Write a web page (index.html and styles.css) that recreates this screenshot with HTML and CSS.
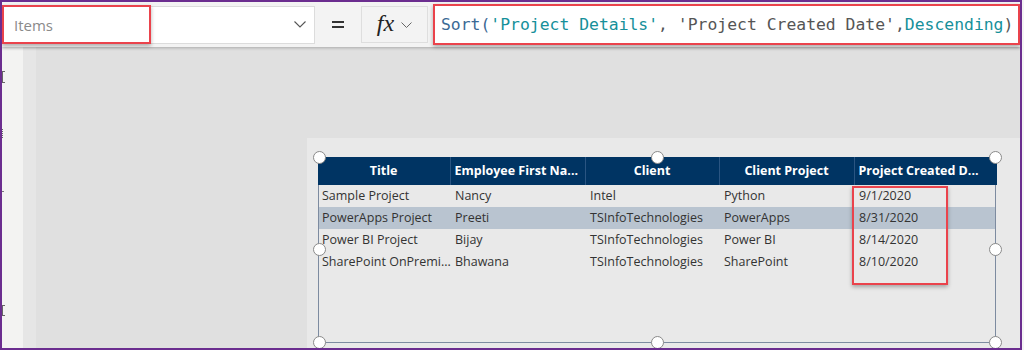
FILE: index.html
```html
<!DOCTYPE html>
<html lang="en">
<head>
    <title>Items - Power Apps</title>
    <link rel="stylesheet" href="styles.css">
</head>
<body>

<div class="frame">
    <div class="formula-bar">
        <div class="property-select">
            <span class="property-name">Items</span>
            <svg class="chevron" width="12" height="7" viewBox="0 0 12 7"><polyline points="0.5,0.5 6,6 11.5,0.5" fill="none" stroke="#555" stroke-width="1.1"/></svg>
            <span class="highlight items-highlight"></span>
        </div>
        <div class="equals"><span></span></div>
        <div class="fx-button">
            <span class="fx">fx</span>
            <svg class="chevron" width="11" height="6" viewBox="0 0 11 6"><polyline points="0.5,0.5 5.5,5.5 10.5,0.5" fill="none" stroke="#666" stroke-width="1"/></svg>
        </div>
        <div class="formula">
            <span class="fn">Sort(</span><span class="str">'Project Details'</span><span class="plain">, 'Project Created Date',</span><span class="str">Descending</span><span class="plain">)</span>
        </div>
    </div>

    <div class="workspace">
        <div class="rail">
            <!-- clipped icon edges of the tree view -->
            <span class="rail-mark mark-1"></span>
            <span class="rail-mark mark-2"></span>
            <span class="rail-mark mark-3"></span>
            <span class="rail-mark mark-4"></span>
        </div>
        <div class="rail-edge"></div>
        <div class="canvas">
            <div class="screen">
                <div class="gallery">
                    <div class="grid header">
                        <div class="head-cell center">Title</div>
                        <div class="head-cell">Employee First Na...</div>
                        <div class="head-cell center">Client</div>
                        <div class="head-cell center">Client Project</div>
                        <div class="head-cell">Project Created D...</div>
                    </div>
                    <div class="grid row">
                        <div>Sample Project</div><div>Nancy</div><div>Intel</div><div>Python</div><div>9/1/2020</div>
                    </div>
                    <div class="grid row selected">
                        <div>PowerApps Project</div><div>Preeti</div><div>TSInfoTechnologies</div><div>PowerApps</div><div>8/31/2020</div>
                    </div>
                    <div class="grid row">
                        <div>Power BI Project</div><div>Bijay</div><div>TSInfoTechnologies</div><div>Power BI</div><div>8/14/2020</div>
                    </div>
                    <div class="grid row">
                        <div>SharePoint OnPremi...</div><div>Bhawana</div><div>TSInfoTechnologies</div><div>SharePoint</div><div>8/10/2020</div>
                    </div>

                    <span class="highlight dates-highlight"></span>

                    <span class="handle h-tl"></span>
                    <span class="handle h-tc"></span>
                    <span class="handle h-tr"></span>
                    <span class="handle h-ml"></span>
                    <span class="handle h-mr"></span>
                    <span class="handle h-bl"></span>
                    <span class="handle h-bc"></span>
                    <span class="handle h-br"></span>
                </div>
            </div>
        </div>
    </div>
</div>

</body>
</html>
```

FILE: styles.css
```css
body {
    margin: 0;
    padding: 0;
    background-color: #f4f4f4;
    font-family: "Open Sans", Arial, sans-serif;
}

.frame {
    width: 1022px;
    height: 350px;
    box-sizing: border-box;
    border: 2px solid #6b2d8f;
    display: flex;
    flex-direction: column;
    overflow: hidden;
}

/* top formula bar */

.formula-bar {
    height: 45px;
    flex-shrink: 0;
    display: flex;
    align-items: center;
    background-color: #f3f3f3;
    box-shadow: 0 1px 3px rgba(0, 0, 0, 0.25);
    position: relative;
    z-index: 2;
}

.property-select {
    position: relative;
    width: 312px;
    height: 38px;
    margin-left: 1px;
    box-sizing: border-box;
    background-color: white;
    border: 1px solid #dcdcdc;
    display: flex;
    align-items: center;
    justify-content: space-between;
    padding: 0 8px 0 10px;
}

.property-name {
    font-size: 15px;
    color: #8a8a8a;
}

.equals {
    width: 46px;
    display: flex;
    justify-content: center;
}

.equals span {
    width: 12px;
    height: 3px;
    border-top: 2px solid #333;
    border-bottom: 2px solid #333;
}

.fx-button {
    width: 67px;
    height: 37px;
    box-sizing: border-box;
    background-color: #f3f3f3;
    border: 1px solid #dedede;
    display: flex;
    align-items: center;
    justify-content: center;
    gap: 7px;
    margin-right: 5px;
}

.fx {
    font-family: "Liberation Serif", serif;
    font-style: italic;
    font-size: 24px;
    color: #222;
    line-height: 1;
    margin-top: -3px;
}

.formula {
    width: 587px;
    height: 41px;
    box-sizing: border-box;
    background-color: white;
    border: 2.5px solid #ea434c;
    box-shadow: 0 2px 4px rgba(0, 0, 0, 0.3);
    display: flex;
    align-items: center;
    padding-left: 6px;
    font-family: "DejaVu Sans Mono", "Liberation Mono", monospace;
    font-size: 16.4px;
    white-space: nowrap;
    overflow: hidden;
}

.formula .fn {
    color: #3a6994;
}

.formula .str {
    color: #16909a;
}

.formula .plain {
    color: #555;
}

.highlight {
    position: absolute;
    border: 2.5px solid #ea434c;
    box-shadow: 0 2px 4px rgba(0, 0, 0, 0.3);
    pointer-events: none;
}

.items-highlight {
    left: -2px;
    top: -2px;
    width: 145px;
    height: 35px;
}

/* workspace below */

.workspace {
    flex: 1;
    display: flex;
}

.rail {
    width: 21px;
    background-color: #f3f3f2;
    position: relative;
}

.rail-mark {
    position: absolute;
    left: 0;
    width: 2px;
    border-left: 1px solid #666;
}

.mark-1 { top: 24px; height: 10px; border-top: 1px solid #666; border-bottom: 1px solid #666; }
.mark-2 { top: 82px; height: 9px; border-left-style: dotted; }
.mark-3 { top: 144px; height: 0; border-left: none; border-top: 1px solid #777; }
.mark-4 { top: 258px; height: 9px; border-top: 1px solid #666; border-bottom: 1px solid #666; }

.rail-edge {
    width: 13px;
    background-color: #e6e6e6;
}

.canvas {
    flex: 1;
    background-color: #e0e0e0;
    padding: 91px 0 0 271px;
    display: flex;
}

.screen {
    flex: 1;
    background-color: #e9e9e9;
    padding: 19px 0 0 11px;
}

.gallery {
    position: relative;
    width: 678px;
    height: 186px;
    box-sizing: border-box;
    border: 1.5px solid #7d8ba0;
    border-top: none;
}

.grid {
    display: grid;
    grid-template-columns: 133px 135px 134px 135px 1fr;
}

.header {
    height: 28px;
    background-color: #003463;
    margin: 0 -1.5px;
}

.head-cell {
    color: white;
    font-weight: bold;
    font-size: 12.5px;
    line-height: 28px;
    padding-left: 4px;
    white-space: nowrap;
    overflow: hidden;
    border-right: 1px solid #2a5582;
}

.head-cell:last-child {
    border-right: none;
}

.head-cell.center {
    text-align: center;
    padding-left: 0;
}

.row {
    height: 22px;
}

.row div {
    font-size: 12.5px;
    color: #333;
    line-height: 22px;
    padding-left: 3px;
    white-space: nowrap;
    overflow: hidden;
}

.row.selected {
    background-color: #b9c4d0;
}

.dates-highlight {
    left: 533px;
    top: 29px;
    width: 92px;
    height: 95px;
}

.handle {
    position: absolute;
    width: 13px;
    height: 13px;
    box-sizing: border-box;
    border-radius: 50%;
    background-color: white;
    border: 1px solid #8a8a8a;
    margin: -6.5px 0 0 -6.5px;
}

.h-tl { left: 0; top: 0; }
.h-tc { left: 50%; top: 0; }
.h-tr { left: 100%; top: 0; }
.h-ml { left: 0; top: 50%; }
.h-mr { left: 100%; top: 50%; }
.h-bl { left: 0; top: 100%; }
.h-bc { left: 50%; top: 100%; }
.h-br { left: 100%; top: 100%; }
```
